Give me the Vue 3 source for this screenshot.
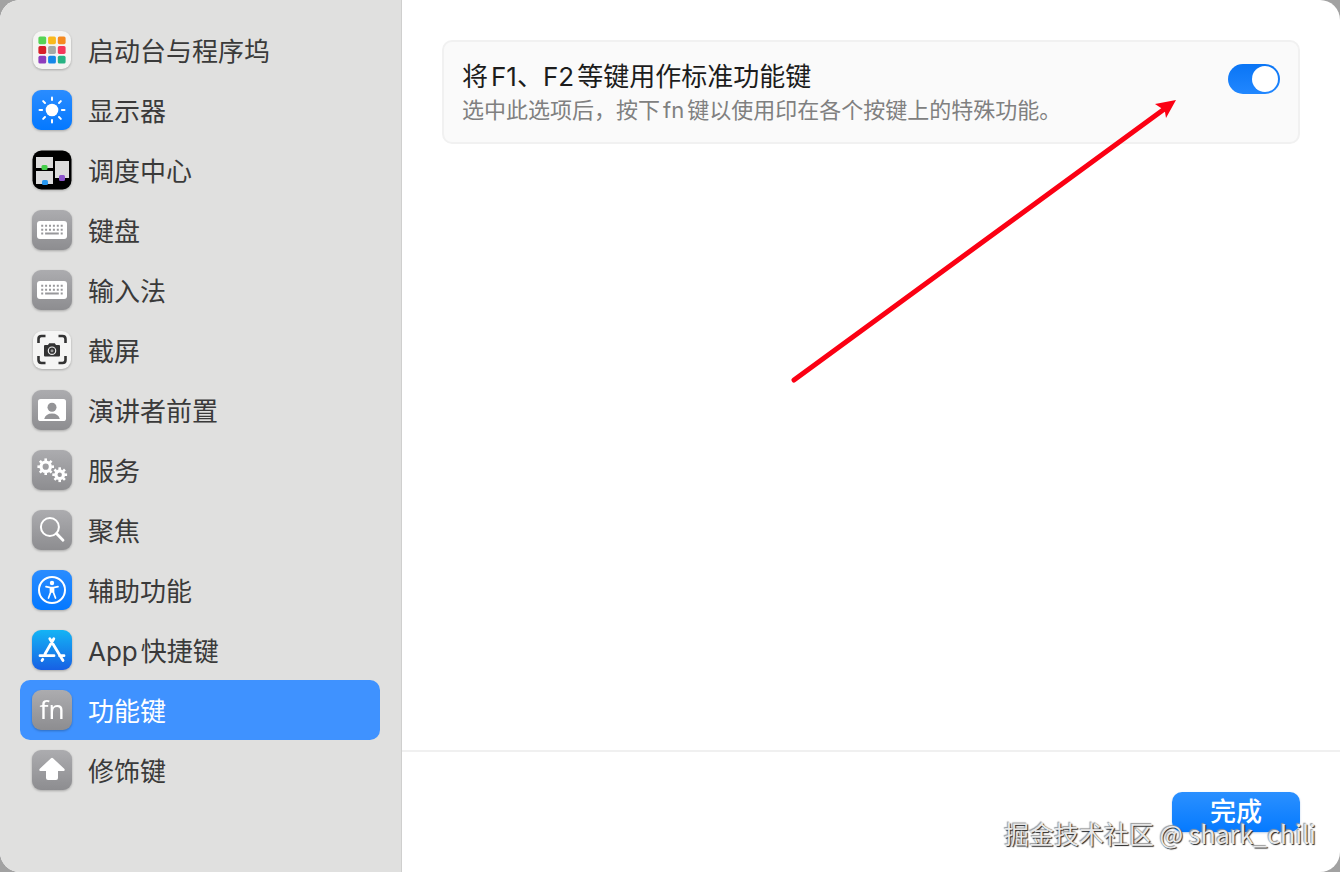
<template>
  <div class="window">
    <nav class="sidebar">
      <button
        v-for="item in items"
        :key="item.icon"
        type="button"
        class="item"
        :class="{ active: item.icon === state.selected }"
        @click="select(item)"
      >
        <svg class="icon" viewBox="0 0 40 40" aria-hidden="true">
          <rect
            v-if="item.tile"
            width="40"
            height="40"
            rx="9"
            :fill="`url(#${item.tile})`"
          />
          <g v-if="item.icon === 'launchpad'">
            <rect x="1" y="1" width="38" height="38" rx="9" fill="#f5f5f3" />
            <rect
              v-for="(color, i) in launchpadColors"
              :key="color"
              :x="6.4 + (i % 3) * 9.7"
              :y="6.4 + Math.floor(i / 3) * 9.7"
              width="7.8"
              height="7.8"
              rx="1.6"
              :fill="color"
            />
          </g>
          <g v-else-if="item.icon === 'display'" fill="#fff">
            <circle cx="20" cy="20" r="6.3" />
            <rect
              v-for="n in 8"
              :key="n"
              x="19"
              y="6.5"
              width="2"
              height="4.6"
              rx="1"
              :transform="`rotate(${n * 45} 20 20)`"
            />
          </g>
          <g v-else-if="item.icon === 'mission'">
            <rect x="0.5" y="0.5" width="39" height="39" rx="9" fill="#000" />
            <rect x="4" y="7" width="17" height="11" fill="#dcdcdc" />
            <rect x="4" y="21" width="17" height="13" fill="#dcdcdc" />
            <rect x="23" y="11" width="14" height="17" fill="#dcdcdc" />
            <rect x="9.5" y="15" width="6" height="5" rx="1.5" fill="#44cf4b" />
            <rect x="10" y="30" width="6" height="5" rx="1.5" fill="#2797f0" />
            <rect x="27" y="25" width="6" height="6" rx="1.5" fill="#8c55cc" />
          </g>
          <g v-else-if="item.icon === 'keyboard' || item.icon === 'input'">
            <rect x="5" y="11" width="30" height="18" rx="3" fill="#fff" />
            <g stroke="#98989b" stroke-width="2" stroke-dasharray="2 1.9">
              <path d="M9.2 15.7h21.6M9.2 19.7h21.6" />
            </g>
            <path
              d="M9.2 23.6h2M13.1 23.6h13.7M28.7 23.6h2"
              stroke="#98989b"
              stroke-width="2"
            />
          </g>
          <g v-else-if="item.icon === 'screenshot'">
            <rect x="1" y="1" width="38" height="38" rx="9" fill="#f5f5f4" />
            <path
              d="M6.5 13V9q0-3 3-3h4M26.5 6h4q3 0 3 3v4M33.5 26v4q0 3-3 3h-4M13.5 33h-4q-3 0-3-3v-4"
              fill="none"
              stroke="#333"
              stroke-width="2.6"
            />
            <path
              d="M13 15h3l1.2-1.7h5.6L24 15h3q1 0 1 1v9.5q0 1-1 1H13q-1 0-1-1V16q0-1 1-1z"
              fill="#333"
            />
            <circle
              cx="20"
              cy="20.7"
              r="3.7"
              fill="none"
              stroke="#eee"
              stroke-width="1.2"
            />
            <circle cx="20" cy="20.7" r="1.5" fill="#999" />
          </g>
          <g v-else-if="item.icon === 'presenter'">
            <rect x="6" y="9" width="28" height="22" rx="2.6" fill="#fff" />
            <circle cx="20" cy="17.3" r="4.5" fill="#949497" />
            <path
              d="M12.200 29q1.500-5.500 7.800-5.500t7.800 5.500z"
              fill="#949497"
            />
          </g>
          <g v-else-if="item.icon === 'services'" fill="none" stroke="#fff">
            <g v-for="gear in gears" :key="gear.x">
              <circle
                :cx="gear.x"
                :cy="gear.y"
                :r="gear.r"
                stroke-width="3.2"
              />
              <path
                v-for="n in 8"
                :key="n"
                :d="`M${gear.x} ${gear.y - gear.r - 1}v-2.6`"
                :transform="`rotate(${n * 45} ${gear.x} ${gear.y})`"
                stroke-width="2.6"
              />
            </g>
          </g>
          <g v-else-if="item.icon === 'spotlight'" fill="none" stroke="#fff">
            <circle cx="17.9" cy="17" r="9" stroke-width="2" />
            <path
              d="M24.5 23.5l6.500 6.700"
              stroke-width="2.8"
              stroke-linecap="round"
            />
          </g>
          <g v-else-if="item.icon === 'accessibility'">
            <circle
              cx="20"
              cy="20"
              r="13"
              fill="none"
              stroke="#fff"
              stroke-width="2"
            />
            <circle cx="20" cy="13" r="2.2" fill="#fff" />
            <path
              d="M14 16.600l4.500 1h3l4.500-1M18.500 18v4.500L16.500 28M21.500 18v4.500l2 5.500M20 17.500V22"
              fill="none"
              stroke="#fff"
              stroke-width="1.7"
              stroke-linecap="round"
            />
          </g>
          <path
            v-else-if="item.icon === 'appstore'"
            d="M21.8 8.800L13 24M17.800 8.800L31 30.500M8 25.700h14M27.500 25.700H32M10.800 29.300l-.8 1.200"
            fill="none"
            stroke="#fff"
            stroke-width="2.8"
            stroke-linecap="round"
          />
          <text
            v-else-if="item.icon === 'fn'"
            x="20"
            y="29"
            text-anchor="middle"
            class="fn"
          >
            fn
          </text>
          <path
            v-else
            d="M19 8.300q1-.9 2 0L32.500 19q1 1.500-.7 2H26v7q0 2-2 2h-8q-2 0-2-2v-7H8.200q-1.700-.5-.7-2z"
            fill="#fff"
          />
        </svg>
        <span class="label">
          <span v-if="item.prefix" class="prefix">{{ item.prefix }}</span
          >{{ item.label }}
        </span>
      </button>
    </nav>

    <main class="content">
      <section class="pane">
        <div class="card">
          <div>
            <label class="title" for="fn-keys">
              将<span class="after-han">F1</span>、<span class="before-han"
                >F2</span
              >等键用作标准功能键
            </label>
            <p id="fn-desc" class="desc">
              选中此选项后，按下<span class="after-han before-han">fn</span
              >键以使用印在各个按键上的特殊功能。
            </p>
          </div>
          <input
            id="fn-keys"
            v-model="state.standardKeys"
            class="switch"
            type="checkbox"
            role="switch"
            aria-describedby="fn-desc"
          />
        </div>
        <svg class="arrow" viewBox="0 0 390 290" aria-hidden="true">
          <path
            d="M4 284L373 14"
            stroke="#fb0013"
            stroke-width="5"
            stroke-linecap="round"
          />
          <path d="M386 4L365 8l6 4 4 4 1 6z" fill="#fb0013" />
        </svg>
      </section>
      <footer class="footer">
        <button type="button" class="done">完成</button>
      </footer>
      <span class="watermark">掘金技术社区 @ shark_chili</span>
    </main>

    <svg width="0" height="0" class="defs" aria-hidden="true">
      <defs>
        <linearGradient id="gray" x2="0" y2="1">
          <stop stop-color="#acacaf" />
          <stop offset="1" stop-color="#8d8d90" />
        </linearGradient>
        <linearGradient id="blue" x2="0" y2="1">
          <stop stop-color="#2a8cff" />
          <stop offset="1" stop-color="#0478ff" />
        </linearGradient>
        <linearGradient id="store" x2="0" y2="1">
          <stop stop-color="#14b4f5" />
          <stop offset="1" stop-color="#1760e4" />
        </linearGradient>
      </defs>
    </svg>
  </div>
</template>

<script setup>
import { reactive } from "vue";

const state = reactive({
  selected: "fn",
  standardKeys: true,
});

const items = [
  { icon: "launchpad", label: "启动台与程序坞" },
  { icon: "display", label: "显示器", tile: "blue" },
  { icon: "mission", label: "调度中心" },
  { icon: "keyboard", label: "键盘", tile: "gray" },
  { icon: "input", label: "输入法", tile: "gray" },
  { icon: "screenshot", label: "截屏" },
  { icon: "presenter", label: "演讲者前置", tile: "gray" },
  { icon: "services", label: "服务", tile: "gray" },
  { icon: "spotlight", label: "聚焦", tile: "gray" },
  { icon: "accessibility", label: "辅助功能", tile: "blue" },
  { icon: "appstore", prefix: "App", label: "快捷键", tile: "store" },
  { icon: "fn", label: "功能键", tile: "gray" },
  { icon: "modifier", label: "修饰键", tile: "gray" },
];

const launchpadColors = [
  "#55d455",
  "#f9b91c",
  "#f58a20",
  "#d81f28",
  "#a4aaa6",
  "#f5365c",
  "#8e3dbd",
  "#1688e8",
  "#27b383",
];

const gears = [
  { x: 13.7, y: 16.7, r: 4.7 },
  { x: 27.7, y: 24.7, r: 3.8 },
];

const select = (item) => {
  state.selected = item.icon;
};
</script>

<style>
body {
  margin: 0;
  background: #a2a2a2;
}
</style>

<style scoped>
* {
  box-sizing: border-box;
}
.window {
  display: flex;
  min-height: 100vh;
  border-radius: 20px;
  overflow: hidden;
  background: #fff;
  font-family: Inter, "Noto Sans CJK SC", sans-serif;
}

.sidebar {
  width: 402px;
  flex-shrink: 0;
  padding: 20px 21px 20px 20px;
  background: #e0e0df;
  border-right: 1px solid #cfcfce;
}
.item {
  display: flex;
  align-items: center;
  gap: 16px;
  width: 100%;
  height: 60px;
  padding: 0 12px;
  border: none;
  border-radius: 10px;
  background: none;
  color: #3a3a3a;
  font-family: inherit;
  font-size: 26px;
  line-height: 34px;
  text-align: left;
}
.item.active {
  background: #3f92ff;
  color: #fff;
}
.icon {
  width: 40px;
  height: 40px;
  flex-shrink: 0;
  overflow: visible;
  filter: drop-shadow(0 1px 1px rgba(0, 0, 0, 0.25));
}
.label {
  padding-top: 3px;
}
.prefix {
  margin-right: 3px;
}
.fn {
  fill: #fff;
  font-family: "Noto Sans", sans-serif;
  font-size: 26px;
}

.content {
  position: relative;
  display: flex;
  flex-direction: column;
  flex: 1;
}
.pane {
  position: relative;
  flex: 1;
  padding: 40px;
}
.card {
  display: flex;
  justify-content: space-between;
  align-items: flex-start;
  padding: 18px 18px 16px;
  border: 2px solid #f1f1f1;
  border-radius: 10px;
  background: #fafafa;
}
.title {
  display: block;
  color: #1c1c1c;
  font-size: 26px;
  line-height: 34px;
}
.desc {
  margin: 0;
  color: #808080;
  font-size: 22px;
  line-height: 32px;
}
.after-han {
  margin-left: 3px;
}
.before-han {
  margin-right: 3px;
}
.switch {
  appearance: none;
  width: 52px;
  height: 30px;
  margin: 4px 0 0;
  padding: 2px;
  border-radius: 15px;
  background: #d5d5d5;
}
.switch::before {
  content: "";
  display: block;
  width: 26px;
  height: 26px;
  border-radius: 50%;
  background: #fff;
}
.switch:checked {
  background: linear-gradient(#0a75f5, #2187ff);
}
.switch:checked::before {
  margin-left: auto;
}
.arrow {
  position: absolute;
  top: 96px;
  left: 388px;
  width: 390px;
  height: 290px;
  fill: none;
  pointer-events: none;
}

.footer {
  display: flex;
  justify-content: flex-end;
  padding: 40px;
  border-top: 2px solid #f0f0f0;
}
.done {
  width: 128px;
  height: 40px;
  padding: 0;
  border: none;
  border-radius: 10px;
  background: linear-gradient(#2b90ff, #057aff);
  box-shadow: 0 1px 2px rgba(0, 90, 200, 0.3);
  color: #fff;
  font-family: inherit;
  font-size: 26px;
  font-weight: 500;
  line-height: 38px;
}
.watermark {
  position: absolute;
  right: 24px;
  bottom: 22px;
  color: #e8e8e8;
  font-family: "Noto Sans CJK SC", sans-serif;
  font-size: 25px;
  line-height: 34px;
  text-shadow: 1px 1px 1px #222, -1px -1px 1px #999;
  pointer-events: none;
}
.defs {
  position: absolute;
}
</style>
